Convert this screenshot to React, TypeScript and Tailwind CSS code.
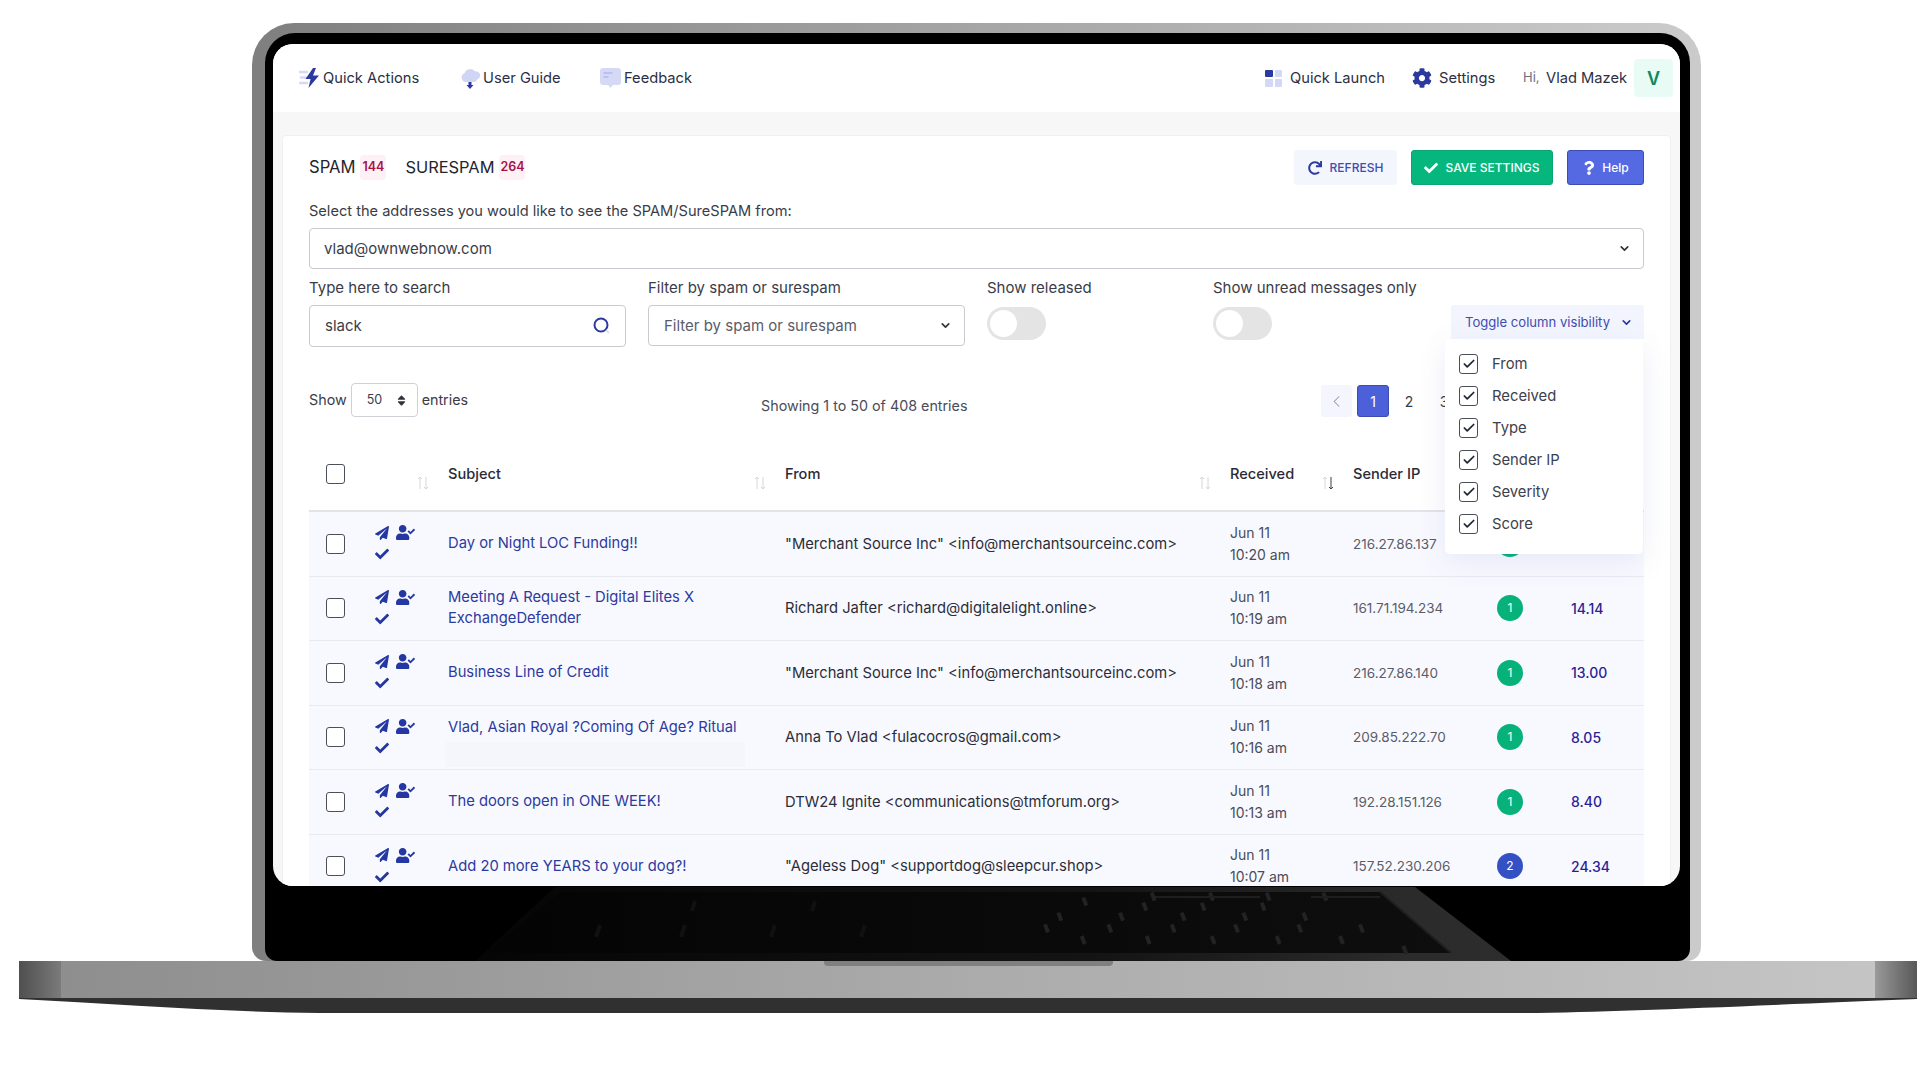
import React from "react";
import { FaPaperPlane, FaUserCheck, FaCheck, FaRedo, FaQuestion, FaCog, FaSort } from "react-icons/fa";
import { ChevronDown, ChevronLeft, Check } from "lucide-react";

type Row = { subject: string[]; from: string; time: string; ip: string; sev: number; score: string; top?: boolean };

const rows: Row[] = [
  { subject: ["Day or Night LOC Funding!!"], from: '"Merchant Source Inc" <info@merchantsourceinc.com>', time: "10:20 am", ip: "216.27.86.137", sev: 1, score: "" },
  { subject: ["Meeting A Request - Digital Elites X", "ExchangeDefender"], from: "Richard Jafter <richard@digitalelight.online>", time: "10:19 am", ip: "161.71.194.234", sev: 1, score: "14.14" },
  { subject: ["Business Line of Credit"], from: '"Merchant Source Inc" <info@merchantsourceinc.com>', time: "10:18 am", ip: "216.27.86.140", sev: 1, score: "13.00" },
  { subject: ["Vlad, Asian Royal ?Coming Of Age? Ritual"], from: "Anna To Vlad <fulacocros@gmail.com>", time: "10:16 am", ip: "209.85.222.70", sev: 1, score: "8.05", top: true },
  { subject: ["The doors open in ONE WEEK!"], from: "DTW24 Ignite <communications@tmforum.org>", time: "10:13 am", ip: "192.28.151.126", sev: 1, score: "8.40" },
  { subject: ["Add 20 more YEARS to your dog?!"], from: '"Ageless Dog" <supportdog@sleepcur.shop>', time: "10:07 am", ip: "157.52.230.206", sev: 2, score: "24.34" },
];

const cols = "grid grid-cols-[139px_337px_445px_123px_144px_74px_73px]";

function SortArrows({ active }: { active?: boolean }) {
  return (
    <svg width="14" height="16" viewBox="0 0 14 16" fill="none" className="shrink-0 mt-[11px]">
      <path d="M4 14V2M2 4l2-2 2 2" stroke="#d4d6dc" strokeWidth="1" />
      <path d="M10 2v12M8 12l2 2 2-2" stroke={active ? "#3a3f4a" : "#d4d6dc"} strokeWidth="1" />
    </svg>
  );
}

function Toggle() {
  return (
    <div className="w-[59px] h-[33px] rounded-full bg-[#e4e4e4] flex items-center pl-[3px]">
      <div className="w-[27px] h-[27px] rounded-full bg-white" />
    </div>
  );
}

function Box({ checked }: { checked?: boolean }) {
  return (
    <div className="w-[19px] h-[20px] rounded-[3px] border border-[#4b4f5a] bg-white flex items-center justify-center shrink-0">
      {checked && <Check size={14} strokeWidth={3} className="text-[#1f2430]" />}
    </div>
  );
}

function NavIconBolt() {
  return (
    <svg width="22" height="20" viewBox="0 0 22 20">
      <path d="M0 4h8M2 9.500h5M1 15h7" stroke="#d5d9f5" strokeWidth="2.500" strokeLinecap="round" />
      <path d="M14 0L6.500 11h5L9.500 20 20 7.500h-6L17 0z" fill="#2c3aa0" />
    </svg>
  );
}

function NavIconCloud() {
  return (
    <svg width="20" height="24" viewBox="0 0 20 24">
      <path d="M5 16a4.500 4.500 0 0 1-1.500-8.700A6 6 0 0 1 14 5.500 4 4 0 0 1 16 13.500 4 4 0 0 1 14 16z" fill="#d0d5f6" />
      <path d="M7.500 16h3v3h2L9 23l-3.500-4h2z" fill="#2c3aa0" />
    </svg>
  );
}

function NavIconChat() {
  return (
    <svg width="21" height="20" viewBox="0 0 21 20">
      <path d="M3 0h15a3 3 0 0 1 3 3v11a3 3 0 0 1-3 3h-5l-2.500 3L8 17H3a3 3 0 0 1-3-3V3a3 3 0 0 1 3-3z" fill="#d5d9f6" />
      <path d="M3.500 5h9M3.500 9h5" stroke="#b3baea" strokeWidth="1.500" />
    </svg>
  );
}

function LaunchIcon() {
  return (
    <div className="grid grid-cols-2 gap-[2px] w-[17px]">
      <div className="h-[7.500px] rounded-[1px] bg-[#2c3aa0]" />
      <div className="h-[7.500px] rounded-[1px] bg-[#d3d8f6]" />
      <div className="h-[7.500px] rounded-[1px] bg-[#d3d8f6]" />
      <div className="h-[7.500px] rounded-[1px] bg-[#d3d8f6]" />
    </div>
  );
}

function Header() {
  return (
    <div className="h-[68px] shrink-0 bg-white flex items-center pl-[26px] pr-[7px] text-[14.700px] text-[#2c2f45]">
      <div className="flex items-center gap-[2px] w-[162px]"><NavIconBolt /><span>Quick Actions</span></div>
      <div className="flex items-center gap-[2px] w-[139px]"><NavIconCloud /><span>User Guide</span></div>
      <div className="flex items-center gap-[3px]"><NavIconChat /><span>Feedback</span></div>
      <div className="ml-auto flex items-center">
        <LaunchIcon />
        <span className="ml-[8px] w-[122px]">Quick Launch</span>
        <FaCog size={20} className="text-[#2c3aa0]" />
        <span className="ml-[7px] w-[84px]">Settings</span>
        <span className="w-[23px] text-[13px] text-[#6b6f80]">Hi,</span>
        <span className="w-[88px]">Vlad Mazek</span>
        <div className="w-[39px] h-[38px] rounded-[4px] bg-[#e8fbf4] flex items-center justify-center text-[18px] font-semibold text-[#0a8a5c]">V</div>
      </div>
    </div>
  );
}

function Tabs() {
  return (
    <div className="h-[35px] flex items-center">
      <span className="text-[16.600px] text-[#23242e]">SPAM</span>
      <span className="ml-[5px] w-[26px] h-[25px] rounded-[4px] bg-[#fdf1f5] text-[12.500px] font-semibold text-[#a6124a] flex items-center justify-center">144</span>
      <span className="ml-[19px] text-[16.400px] text-[#23242e]">SURESPAM</span>
      <span className="ml-[5px] w-[26px] h-[25px] rounded-[4px] bg-[#fdf1f5] text-[12.500px] font-semibold text-[#a6124a] flex items-center justify-center">264</span>
      <div className="ml-auto flex items-center gap-[14px] text-[12px] font-medium">
        <div className="w-[103px] h-[35px] rounded-[3px] bg-[#f4f6fe] text-[#3f4db0] flex items-center justify-center gap-[8px]">
          <FaRedo size={14} className="text-[#2c3aa0]" />
          <span>REFRESH</span>
        </div>
        <div className="w-[142px] h-[35px] rounded-[3px] bg-[#05b67d] border border-[#0ba573] text-white flex items-center justify-center gap-[7px]">
          <FaCheck size={14} />
          <span>SAVE SETTINGS</span>
        </div>
        <div className="w-[77px] h-[35px] rounded-[3px] bg-[#5469e2] border border-[#3c4cb3] text-white flex items-center justify-center gap-[6px]">
          <FaQuestion size={14} />
          <span>Help</span>
        </div>
      </div>
    </div>
  );
}

function Filters() {
  return (
    <div className="mt-[9px] flex text-[15px] text-[#3a3c48]">
      <div className="w-[317px] mr-[22px]">
        <div className="h-[20px] leading-[20px]">Type here to search</div>
        <div className="mt-[7px] h-[42px] rounded-[4px] border border-[#c9c9cf] flex items-center justify-between pl-[15px] pr-[15px] text-[#3b3d49]">
          <span>slack</span>
          <svg width="17" height="18" viewBox="0 0 17 18" fill="none">
            <circle cx="8" cy="8" r="6.500" stroke="#2c3aa0" strokeWidth="2" />
            <path d="M13 13l3 3" stroke="#d5d9f5" strokeWidth="1.500" />
          </svg>
        </div>
      </div>
      <div className="w-[317px] mr-[22px]">
        <div className="h-[20px] leading-[20px]">Filter by spam or surespam</div>
        <div className="mt-[7px] h-[41px] rounded-[4px] border border-[#c9c9cf] flex items-center justify-between pl-[15px] pr-[12px] text-[#5a5c68]">
          <span className="mt-[1px]">Filter by spam or surespam</span>
          <ChevronDown size={13} strokeWidth={3} className="text-[#30323c]" />
        </div>
      </div>
      <div className="w-[226px]">
        <div className="h-[20px] leading-[20px]">Show released</div>
        <div className="mt-[9px]"><Toggle /></div>
      </div>
      <div className="w-[238px]">
        <div className="h-[20px] leading-[20px] whitespace-nowrap">Show unread messages only</div>
        <div className="mt-[9px]"><Toggle /></div>
      </div>
      <div className="relative w-[193px] pt-[27px] z-20">
        <div className="h-[34px] rounded-t-[3px] bg-[#f3f5fe] text-[13.100px] text-[#3f4db0] flex items-center pl-[14px] pt-[1px] gap-[10px]">
          <span>Toggle column visibility</span>
          <ChevronDown size={13} strokeWidth={3} className="text-[#2c3aa0]" />
        </div>
        <div className="absolute left-[-6px] top-[61px] w-[198px] h-[215px] bg-white rounded-b-[5px] shadow-[0_8px_30px_rgba(80,90,160,0.10)] pl-[14px] pt-[9px] text-[14.800px]">
          {["From", "Received", "Type", "Sender IP", "Severity", "Score"].map((t) => (
            <div key={t} className="h-[32px] flex items-center gap-[14px] text-[#3e404c]">
              <Box checked />
              <span>{t}</span>
            </div>
          ))}
        </div>
      </div>
    </div>
  );
}

function Entries() {
  return (
    <div className="mt-[36px] flex h-[34px] text-[14.300px] text-[#3a3c48]">
      <div className="w-[452px] flex items-center">
        <span className="mt-[-1px]">Show</span>
        <div className="ml-[4px] w-[67px] h-[34px] rounded-[4px] border border-[#cfcfd5] flex items-center pl-[15px] gap-[13px] text-[12.500px]">
          <span>50</span>
          <FaSort size={13} className="text-[#30323c]" />
        </div>
        <span className="ml-[4px] mt-[-1px]">entries</span>
      </div>
      <div className="w-[560px] pt-[13px] leading-[20px] text-[#4a4c58]">Showing 1 to 50 of 408 entries</div>
      <div className="flex items-center h-[32px] mt-[2px] text-[14px]">
        <div className="w-[31px] h-[32px] rounded-[3px] bg-[#f5f6fd] flex items-center justify-center mr-[5px]">
          <ChevronLeft size={19} strokeWidth={1.300} className="text-[#8f94aa]" />
        </div>
        <div className="w-[32px] h-[32px] rounded-[3px] bg-[#4c60d9] border border-[#3c4cb3] text-white flex items-center justify-center">1</div>
        <div className="w-[40px] text-center">2</div>
        <div className="w-[30px] text-center">3</div>
      </div>
    </div>
  );
}

function TableHead() {
  return (
    <div className={`${cols} mt-[47px] h-[48px] border-b-2 border-[#e3e4e8] text-[14.600px] font-medium text-[#2a2b36]`}>
      <div className="flex justify-between pl-[17px] pr-[18px]">
        <Box />
        <SortArrows />
      </div>
      <div className="flex justify-between pr-[18px] leading-[20px]"><span>Subject</span><SortArrows /></div>
      <div className="flex justify-between pr-[18px] leading-[20px]"><span>From</span><SortArrows /></div>
      <div className="flex justify-between pr-[18px] leading-[20px]"><span>Received</span><SortArrows active /></div>
      <div className="flex justify-between pr-[23px] leading-[20px]"><span>Sender IP</span><SortArrows /></div>
      <div />
      <div />
    </div>
  );
}

function TableRow({ r }: { r: Row }) {
  return (
    <div className={`${cols} h-[64.500px] bg-[#f8f9ff] border-b border-[#e9eaf0] text-[14.750px]`}>
      <div className="flex items-center pl-[17px]">
        <Box />
        <div className="ml-[30px] mb-[3px] flex flex-col gap-[5px] text-[#2537a0]">
          <div className="flex items-center gap-[7px]">
            <FaPaperPlane size={14} />
            <FaUserCheck size={19} />
          </div>
          <FaCheck size={14} />
        </div>
      </div>
      {r.top ? (
        <div className="flex flex-col pt-[11px] pr-[40px] text-[#2d3a9e] leading-[21px]">
          <span className="whitespace-nowrap">{r.subject[0]}</span>
          <div className="mt-[4px] ml-[-2px] h-[25px] bg-[#f5f6fb]" />
        </div>
      ) : (
        <div className="flex flex-col justify-center text-[#2d3a9e] leading-[21px]">
          {r.subject.map((s) => <span key={s} className="whitespace-nowrap">{s}</span>)}
        </div>
      )}
      <div className="flex items-center text-[#2c2d38] tracking-[0.02px]">{r.from}</div>
      <div className="flex flex-col justify-center leading-[22px] text-[14px] text-[#4a4c58]">
        <span>Jun 11</span>
        <span>{r.time}</span>
      </div>
      <div className="flex items-center text-[#5a5c68] text-[13.500px]">{r.ip}</div>
      <div className="flex items-center">
        <div className={`w-[26px] h-[26px] rounded-full flex items-center justify-center text-white text-[12px] ${r.sev === 1 ? "bg-[#06b279]" : "bg-[#3350c4]"}`}>{r.sev}</div>
      </div>
      <div className="flex items-center font-medium text-[14px] text-[#2a1f96]">{r.score}</div>
    </div>
  );
}

function Screen() {
  return (
    <div className="relative z-10 w-[1407px] h-[842px] rounded-[20px] overflow-hidden bg-[#f7f7f8] flex flex-col">
      <Header />
      <div className="flex-1 pt-[23px] px-[9px] min-h-0">
        <div className="h-[900px] rounded-[4px] bg-white border border-[#f0f0f2] px-[26px] pt-[14px]">
          <Tabs />
          <div className="mt-[16px] h-[20px] leading-[20px] text-[14.600px] text-[#3a3c48]">Select the addresses you would like to see the SPAM/SureSPAM from:</div>
          <div className="mt-[7px] h-[41px] rounded-[4px] border border-[#c9c9cf] flex items-center justify-between pl-[14px] pr-[12px] text-[15px] text-[#3a3c48]">
            <span className="mt-[1px]">vlad@ownwebnow.com</span>
            <ChevronDown size={13} strokeWidth={3} className="text-[#30323c]" />
          </div>
          <Filters />
          <Entries />
          <TableHead />
          {rows.map((r) => <TableRow key={r.ip} r={r} />)}
        </div>
      </div>
    </div>
  );
}

const keyGaps: [number, number][] = [
  [250, 50], [455, 35], [630, 35], [800, 35], [970, 35],
  [430, 65], [605, 65], [785, 65],
  [175, 95], [360, 95], [545, 95], [730, 95], [910, 95],
  [135, 130], [325, 130], [515, 130], [705, 130], [895, 130], [1080, 130],
  [245, 165], [440, 165], [635, 165], [830, 165], [1020, 165], [1210, 195],
];

function KeyboardReflection() {
  const d = keyGaps.map(([x, y]) => `M${525 + x / 3} ${y / 3 - 6}l3 8`).join("");
  return (
    <svg className="absolute left-[210px] bottom-0 w-[1036px] h-[74px]" viewBox="0 0 1036 74">
      <defs>
        <linearGradient id="kb" x1="0" x2="1" y1="0" y2="0">
          <stop offset="0" stopColor="#050505" />
          <stop offset="0.6" stopColor="#141414" />
          <stop offset="0.9" stopColor="#2b2b2b" />
          <stop offset="1" stopColor="#2d2d2d" />
        </linearGradient>
        <linearGradient id="kc" x1="0" x2="1" y1="0" y2="0">
          <stop offset="0" stopColor="#040404" />
          <stop offset="1" stopColor="#0e0e0e" />
        </linearGradient>
      </defs>
      <path d="M80 0H940L1036 74H0z" fill="url(#kb)" />
      <path d="M85 5H905L976 66H10z" fill="url(#kc)" />
      <path d="M125 38l-4 12M210 38l-4 12M300 38l-4 12M390 38l-4 12M220 14l-3 10M340 14l-3 10" stroke="#111111" strokeWidth="4" />
      <path d={d} stroke="#232323" strokeWidth="4" fill="none" />
      <path d="M680 10H785M836 10H905M905 5L976 66" stroke="#1e1e1e" strokeWidth="2" fill="none" />
    </svg>
  );
}

function Base() {
  return (
    <div className="ml-[19px] w-[1898px]">
      <div className="relative h-[37px] flex bg-gradient-to-r from-[#8d8d8d] via-[#ababab] to-[#c6c6c6]">
        <div className="w-[42px] bg-gradient-to-r from-[#4f4f4f] to-[#7b7b7b]" />
        <div className="flex-1 flex justify-center">
          <div className="w-[289px] h-[5px] rounded-b-[4px] bg-[#808080]" />
        </div>
        <div className="w-[42px] bg-gradient-to-r from-[#9a9a9a] to-[#585858]" />
      </div>
      <svg width="1898" height="15" viewBox="0 0 1898 15" className="block">
        <path d="M0 0H1898V1C1700 9 1600 14 1500 15H300C200 14 100 6 0 1Z" fill="#303030" />
      </svg>
    </div>
  );
}

export default function App() {
  return (
    <div className="w-[1920px] h-[1080px] bg-white overflow-hidden pt-[23px] font-['Inter',sans-serif]">
      <div className="ml-[252px] w-[1449px] h-[938px] rounded-t-[42px] rounded-b-[14px] bg-gradient-to-r from-[#7f7f7f] via-[#a5a5a5] to-[#cbcbcb] pt-[10px] pl-[13px] pr-[11px]">
        <div className="relative h-[928px] rounded-t-[30px] rounded-b-[12px] bg-black pt-[11px] pl-[8px]">
          <Screen />
          <KeyboardReflection />
        </div>
      </div>
      <Base />
    </div>
  );
}
